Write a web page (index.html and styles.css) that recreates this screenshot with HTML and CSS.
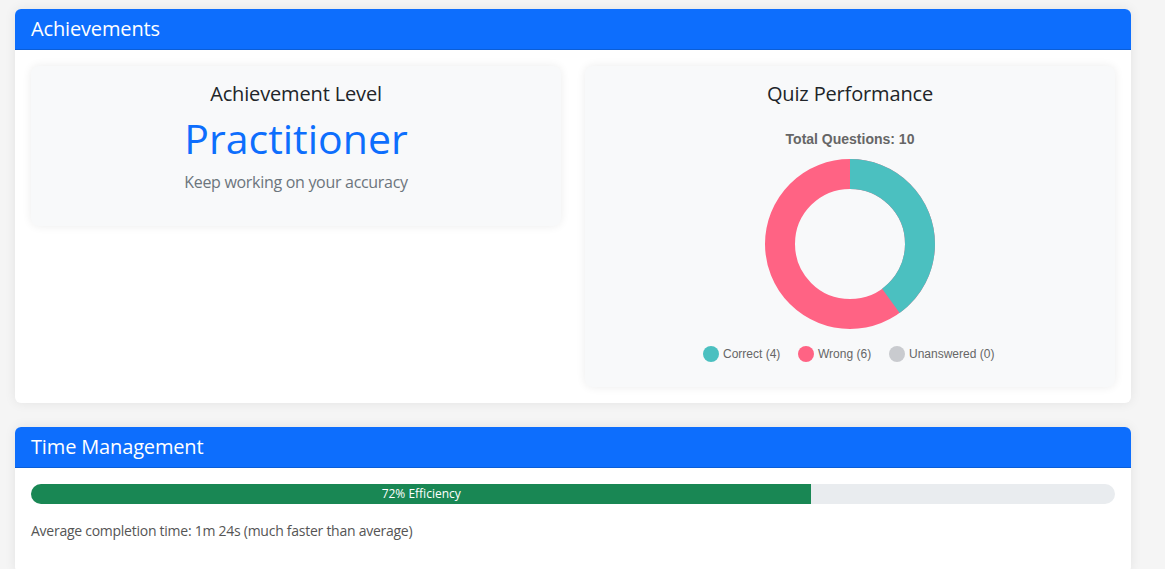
FILE: index.html
```html
<!DOCTYPE html>
<html lang="en">
<head>
    <meta charset="UTF-8">
    <meta name="viewport" content="width=device-width, initial-scale=1.0">
    <title>Results</title>
    <link rel="stylesheet" href="styles.css">
</head>
<body>

<div class="page">

    <div class="card">
        <div class="card-header">Achievements</div>
        <div class="card-body">
            <div class="row">
                <div class="col">
                    <div class="panel">
                        <h5>Achievement Level</h5>
                        <h2 class="level">Practitioner</h2>
                        <p class="muted">Keep working on your accuracy</p>
                    </div>
                </div>
                <div class="col">
                    <div class="panel">
                        <h5>Quiz Performance</h5>
                        <svg class="chart" width="498" height="257" viewBox="0 0 498 257">
                            <text class="chart-title" x="249" y="30" text-anchor="middle">Total Questions: 10</text>
                            <g transform="rotate(-90 249 130)">
                                <circle cx="249" cy="130" r="70" fill="none" stroke="#ff6384" stroke-width="30"/>
                                <circle cx="249" cy="130" r="70" fill="none" stroke="#4bc0c0" stroke-width="30"
                                        stroke-dasharray="175.93 439.82"/>
                            </g>
                            <circle cx="110" cy="240" r="8" fill="#4bc0c0"/>
                            <text class="legend" x="122" y="244">Correct (4)</text>
                            <circle cx="205" cy="240" r="8" fill="#ff6384"/>
                            <text class="legend" x="217" y="244">Wrong (6)</text>
                            <circle cx="296" cy="240" r="8" fill="#c9cbcf"/>
                            <text class="legend" x="308" y="244">Unanswered (0)</text>
                        </svg>
                    </div>
                </div>
            </div>
        </div>
    </div>

    <div class="card">
        <div class="card-header">Time Management</div>
        <div class="card-body">
            <div class="progress">
                <div class="progress-bar" style="width: 72%;">72% Efficiency</div>
            </div>
            <p class="time-note">Average completion time: 1m 24s (much faster than average)</p>
        </div>
    </div>

</div>

</body>
</html>
```

FILE: styles.css
```css
body {
    margin: 0;
    font-family: "Open Sans", "Noto Sans", sans-serif;
    background-color: #f5f5f5;
    color: #212529;
}
.page {
    width: 1116px;
    padding: 9px 0 0 15px;
}
.card {
    background-color: white;
    border-radius: 6px;
    box-shadow: 0 0 12px rgba(0, 0, 0, 0.08);
    margin-bottom: 24px;
    overflow: hidden;
}
.card-header {
    background-color: #0d6efd;
    color: white;
    font-size: 20px;
    line-height: 24px;
    letter-spacing: -0.15px;
    padding: 8px 16px;
    border-bottom: 1px solid #0b5ed7;
}
.card-body {
    padding: 16px;
}
.row {
    display: flex;
    gap: 24px;
    align-items: flex-start;
}
.col {
    flex: 1;
}
.panel {
    background-color: #f8f9fa;
    border-radius: 8px;
    box-shadow: 0 0 10px rgba(0, 0, 0, 0.08);
    padding: 16px;
    text-align: center;
}
h5 {
    margin: 0 0 8px;
    font-size: 20px;
    font-weight: 400;
    line-height: 24px;
    letter-spacing: -0.15px;
}
.level {
    margin: 0 0 8px;
    font-size: 41px;
    font-weight: 500;
    line-height: 48px;
    color: #0d6efd;
}
.muted {
    margin: 0 0 16px;
    font-size: 16px;
    line-height: 24px;
    letter-spacing: -0.3px;
    color: #6c757d;
}
.chart {
    display: block;
}
.chart-title {
    font-family: "Liberation Sans", Arial, sans-serif;
    font-size: 14px;
    font-weight: bold;
    fill: #666;
}
.legend {
    font-family: "Liberation Sans", Arial, sans-serif;
    font-size: 12px;
    fill: #666;
}
.progress {
    height: 20px;
    background-color: #e9ecef;
    border-radius: 10px;
    overflow: hidden;
}
.progress-bar {
    height: 100%;
    background-color: #198754;
    color: white;
    font-size: 12px;
    line-height: 20px;
    text-align: center;
}
.time-note {
    margin: 16px 0;
    font-size: 14px;
    line-height: 21px;
    letter-spacing: -0.26px;
    color: #555;
}
```
